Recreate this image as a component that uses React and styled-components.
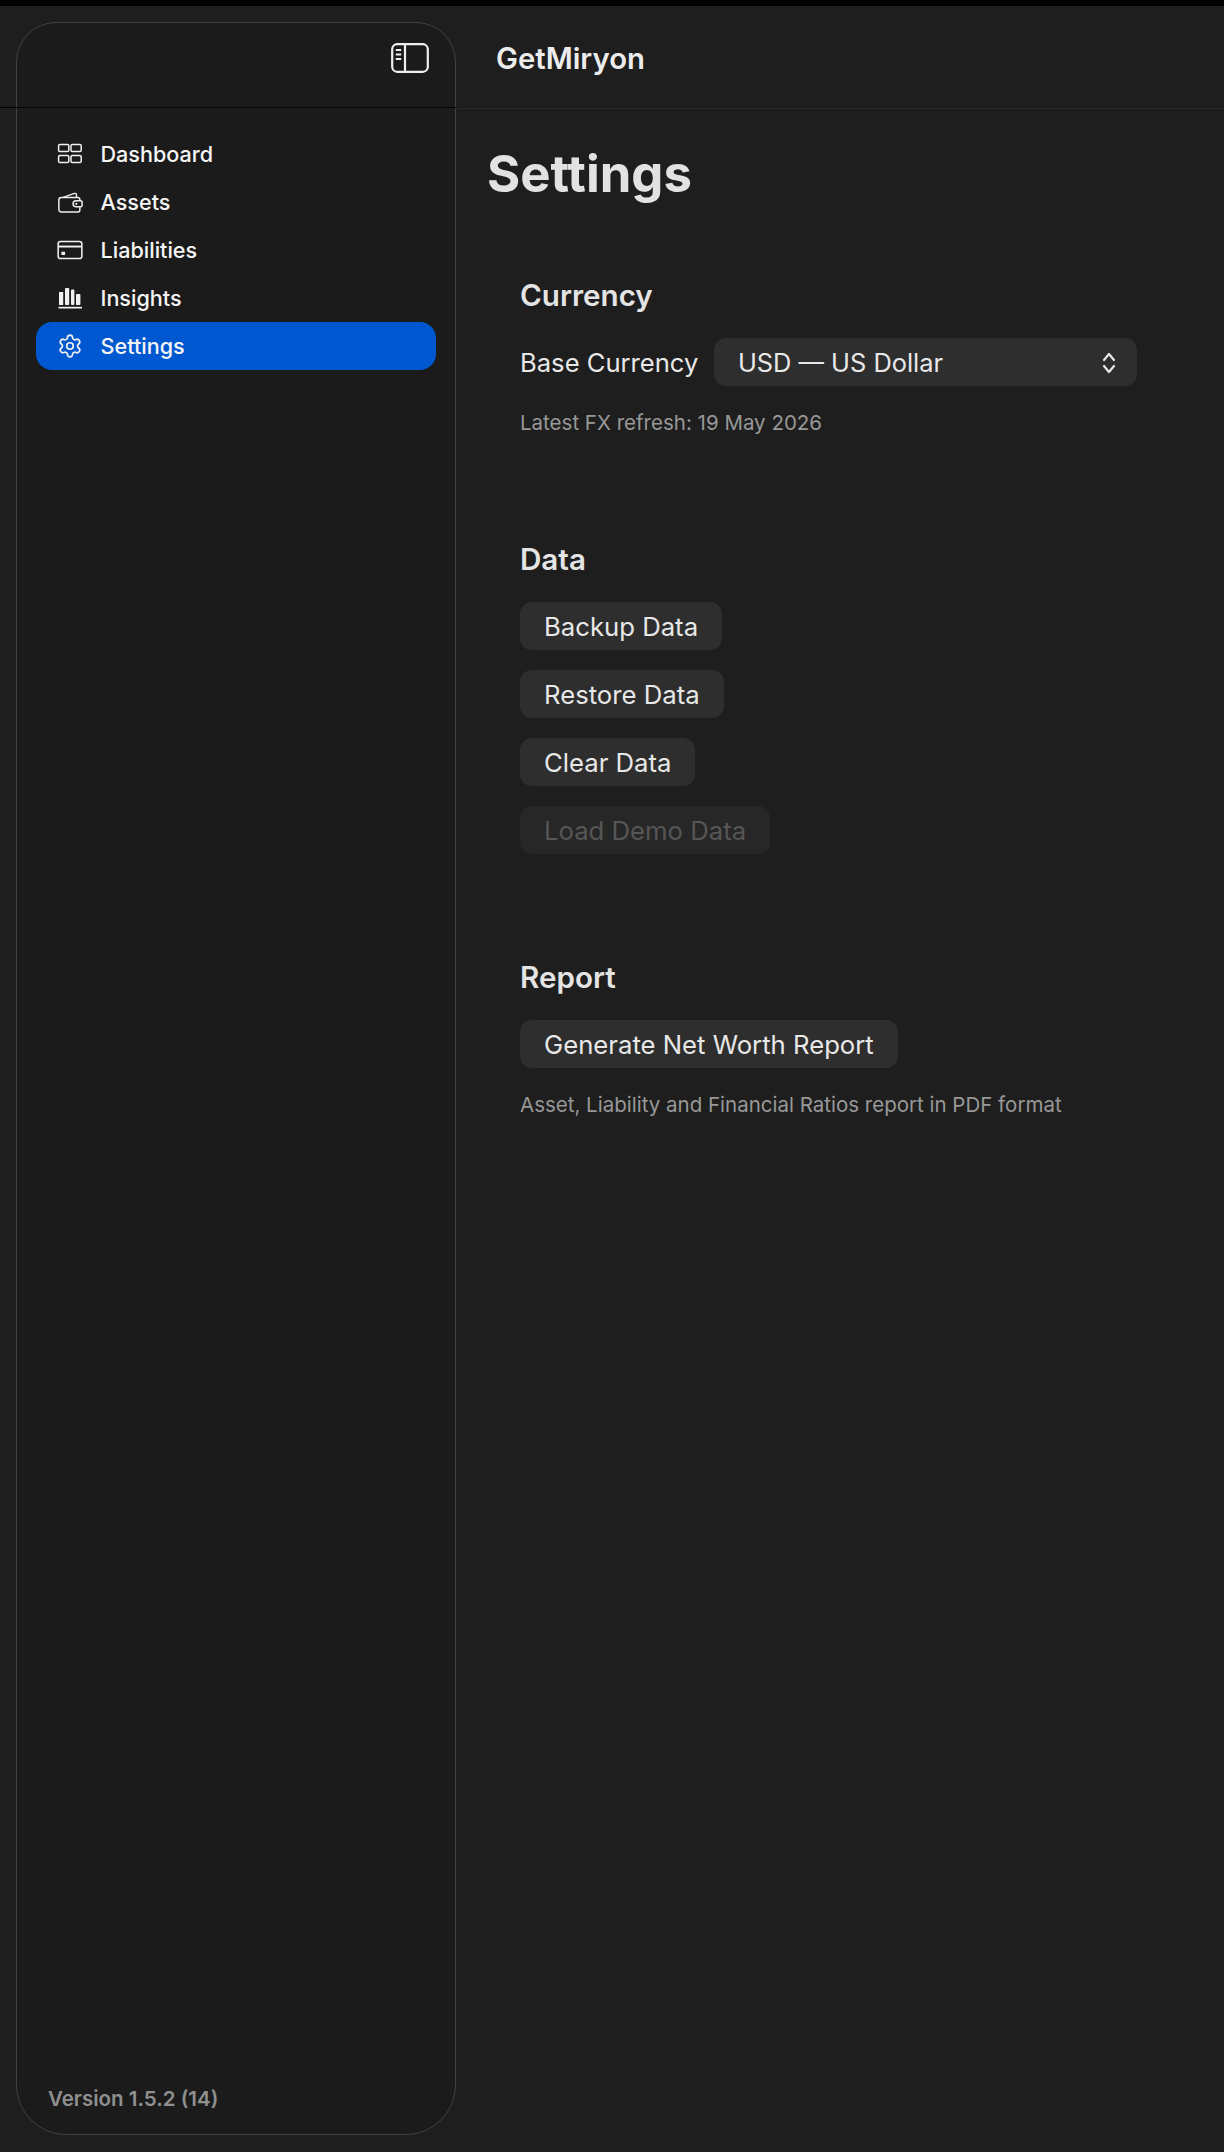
import React from "react";
import styled, { createGlobalStyle } from "styled-components";
import { Settings as GearIcon } from "lucide-react";

const Global = createGlobalStyle`
  html, body { margin: 0; padding: 0; background: #1e1e1e; }
  * { box-sizing: border-box; }
  body { font-family: Inter, "Liberation Sans", sans-serif; -webkit-font-smoothing: antialiased; }
`;

const Page = styled.div`
  width: 1224px;
  height: 2152px;
  display: flex;
  flex-direction: column;
  background: #1e1e1e;
  overflow: hidden;
`;
const TopEdge = styled.div`
  height: 6px;
  flex: none;
  background: #000;
`;
const Shell = styled.div`
  flex: 1;
  display: flex;
  min-height: 0;
`;
const SidebarColumn = styled.aside`
  width: 456px;
  flex: none;
  padding: 16px 0 17px 16px;
  display: flex;
`;
const Panel = styled.div`
  flex: 1;
  display: flex;
  flex-direction: column;
  background: #1b1b1b;
  border: 1.5px solid #424242;
  border-radius: 40px 40px 50px 50px;
`;
const PanelHead = styled.div`
  position: relative;
  height: 85px;
  flex: none;
  display: flex;
  justify-content: flex-end;
  align-items: flex-start;
  padding: 19.5px 26.5px 0 0;
  color: #efefef;
  &::after {
    content: "";
    position: absolute;
    left: -18px;
    right: -2px;
    bottom: 0;
    height: 1.5px;
    background: #050505;
  }
`;
const Nav = styled.nav`
  display: flex;
  flex-direction: column;
  padding: 22px 19.5px 0 18.5px;
`;
const NavRow = styled.div`
  height: 48px;
  display: flex;
  align-items: center;
  gap: 18px;
  padding-left: 21px;
  border-radius: 16px;
  font-size: 21.6px;
  font-weight: 500;
  color: #f5f5f5;
  background: ${(p) => (p.$active ? "#0058d0" : "transparent")};
`;
const IconSlot = styled.span`
  width: 26px;
  height: 26px;
  flex: none;
  display: flex;
  align-items: center;
  justify-content: center;
  color: #f0f0f0;
`;
const Version = styled.div`
  margin-top: auto;
  padding: 0 0 21px 31px;
  font-size: 20.5px;
  line-height: 28px;
  font-weight: 600;
  color: #8f8f8f;
`;
const Main = styled.main`
  flex: 1;
  min-width: 0;
  display: flex;
  flex-direction: column;
`;
const MainHead = styled.header`
  height: 103px;
  flex: none;
  display: flex;
  align-items: center;
  padding: 2px 0 0 40px;
  border-bottom: 1.5px solid #282828;
  font-size: 29.3px;
  font-weight: 600;
  color: #ececec;
`;
const Content = styled.div`
  padding: 35px 0 0 31px;
`;
const Title = styled.h1`
  margin: 0 0 73px;
  font-size: 50.8px;
  line-height: 60px;
  font-weight: 700;
  color: #e2e2e2;
`;
const Section = styled.section`
  display: flex;
  flex-direction: column;
  align-items: flex-start;
  padding-left: 33px;
  margin-bottom: ${(p) => p.$after || 104}px;
`;
const Heading = styled.h2`
  margin: 0 0 25px;
  font-size: 29.6px;
  line-height: 36px;
  font-weight: 600;
  color: #e4e4e4;
`;
const FieldRow = styled.div`
  display: flex;
  align-items: center;
  gap: 15.5px;
  font-size: 25.6px;
  line-height: 40px;
  font-weight: 400;
  color: #e8e8e8;
`;
const FieldLabel = styled.span`
  padding-top: 1px;
`;
const Select = styled.div`
  width: 423px;
  height: 48px;
  display: flex;
  align-items: center;
  justify-content: space-between;
  padding: 1px 21px 0 24px;
  border-radius: 12px;
  background: #2e2e2e;
  font-size: 25.4px;
  color: #e8e8e8;
`;
const ButtonStack = styled.div`
  display: flex;
  flex-direction: column;
  align-items: flex-start;
  gap: 20px;
`;
const ActionButton = styled.button`
  height: 48px;
  padding: 1px 24px 0;
  border: 0;
  border-radius: 12px;
  font-family: inherit;
  font-size: 25.7px;
  font-weight: 400;
  background: ${(p) => (p.disabled ? "#272727" : "#2e2e2e")};
  color: ${(p) => (p.disabled ? "#565656" : "#e8e8e8")};
`;
const Note = styled.p`
  margin: 23px 0 0;
  font-size: 20.5px;
  line-height: 28px;
  font-weight: 400;
  color: #989898;
`;

const stroke = { fill: "none", stroke: "currentColor", strokeWidth: 1.6 };

const ToggleIcon = () => (
  <svg width="38" height="30" viewBox="0 0 38 30" fill="none" stroke="currentColor" strokeWidth="2.2">
    <rect x="1.2" y="1.2" width="35.6" height="27.6" rx="5" />
    <path d="M14 1.2v27.6" />
    <path d="M4.8 7h5.4M4.8 11.5h5.4M4.8 16h5.4" strokeWidth="1.8" />
  </svg>
);
const GridIcon = () => (
  <svg width="26" height="22" viewBox="0 0 26 22" fill="none" stroke="currentColor" strokeWidth="1.5">
    <rect x="1.6" y="1.5" width="10.2" height="7" rx="1.3" />
    <rect x="14" y="1.5" width="10.2" height="7" rx="1.3" />
    <rect x="1.6" y="12.5" width="10.2" height="7" rx="1.3" />
    <rect x="14" y="12.5" width="10.2" height="7" rx="1.3" />
  </svg>
);
const WalletIcon = () => (
  <svg width="28" height="24" viewBox="0 0 28 24" {...stroke}>
    <path d="M6 7.2l12.6-4.4a1.8 1.8 0 0 1 2.4 1.7v2.7" strokeWidth="1.5" />
    <path d="M24.6 10.6V9.4a2.2 2.2 0 0 0-2.2-2.2H4.6A2.6 2.6 0 0 0 2 9.8v10.4a2.6 2.6 0 0 0 2.6 2.6h17.8a2.2 2.2 0 0 0 2.2-2.2v-3" />
    <path d="M20.6 10.6h5a1.4 1.4 0 0 1 1.4 1.4v3.8a1.4 1.4 0 0 1-1.4 1.4h-5a3.3 3.3 0 0 1 0-6.6z" />
    <circle cx="20.8" cy="13.9" r="1.2" fill="currentColor" stroke="none" />
  </svg>
);
const CardIcon = () => (
  <svg width="27" height="20" viewBox="0 0 27 20" {...stroke}>
    <rect x="1.2" y="1.2" width="24.6" height="17.6" rx="2.4" />
    <path d="M1.2 6.4h24.6" strokeWidth="2" />
    <rect x="4.6" y="11.8" width="3.8" height="3.4" fill="currentColor" stroke="none" />
  </svg>
);
const BarsIcon = () => (
  <svg width="26" height="24" viewBox="0 0 26 24" fill="currentColor">
    <rect x="2" y="6" width="4.2" height="13" rx="0.6" />
    <rect x="8" y="2" width="4.2" height="17" rx="1" />
    <rect x="14" y="3.5" width="3.4" height="15.5" rx="1" />
    <rect x="19" y="8" width="4.4" height="11" rx="0.8" />
    <rect x="1.5" y="20.8" width="23.5" height="1.7" />
  </svg>
);
const UpDownIcon = () => (
  <svg width="14" height="24" viewBox="0 0 14 24" fill="none" stroke="#e8e8e8" strokeWidth="2.2" strokeLinecap="round" strokeLinejoin="round">
    <path d="M2 9l5-6 5 6" />
    <path d="M2 15l5 6 5-6" />
  </svg>
);

const items = [
  ["Dashboard", <GridIcon />],
  ["Assets", <WalletIcon />],
  ["Liabilities", <CardIcon />],
  ["Insights", <BarsIcon />],
  ["Settings", <GearIcon size={26} strokeWidth={1.6} />, true],
];

export default function App() {
  return (
    <>
      <Global />
      <Page>
        <TopEdge />
        <Shell>
          <SidebarColumn>
            <Panel>
              <PanelHead>
                <ToggleIcon />
              </PanelHead>
              <Nav>
                {items.map(([label, icon, active]) => (
                  <NavRow key={label} $active={active}>
                    <IconSlot>{icon}</IconSlot>
                    {label}
                  </NavRow>
                ))}
              </Nav>
              <Version>Version 1.5.2 (14)</Version>
            </Panel>
          </SidebarColumn>
          <Main>
            <MainHead>GetMiryon</MainHead>
            <Content>
              <Title>Settings</Title>
              <Section>
                <Heading>Currency</Heading>
                <FieldRow>
                  <FieldLabel>Base Currency</FieldLabel>
                  <Select>
                    USD — US Dollar
                    <UpDownIcon />
                  </Select>
                </FieldRow>
                <Note>Latest FX refresh: 19 May 2026</Note>
              </Section>
              <Section $after={104.5}>
                <Heading>Data</Heading>
                <ButtonStack>
                  <ActionButton>Backup Data</ActionButton>
                  <ActionButton>Restore Data</ActionButton>
                  <ActionButton>Clear Data</ActionButton>
                  <ActionButton disabled>Load Demo Data</ActionButton>
                </ButtonStack>
              </Section>
              <Section>
                <Heading>Report</Heading>
                <ButtonStack>
                  <ActionButton>Generate Net Worth Report</ActionButton>
                </ButtonStack>
                <Note>Asset, Liability and Financial Ratios report in PDF format</Note>
              </Section>
            </Content>
          </Main>
        </Shell>
      </Page>
    </>
  );
}
